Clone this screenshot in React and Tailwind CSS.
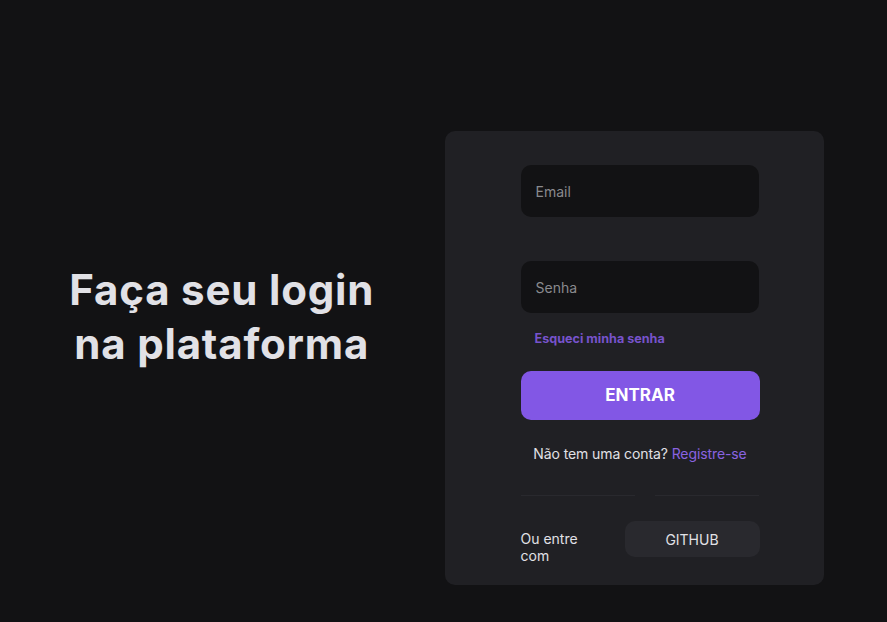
import React from "react";

const App = () => {
  return (
    <div
      className="w-full h-[622px] bg-[#121214] grid grid-cols-2"
      style={{ fontFamily: "Inter, 'Noto Sans', sans-serif" }}
    >
      {/* Heading */}
      <div className="flex items-start justify-center pt-[263px]">
        <h1 className="text-[42px] leading-[54px] font-bold text-[#e1e1e6] text-center tracking-[0.8px]">
          Faça seu login
          <br />
          na plataforma
        </h1>
      </div>

      {/* Login card */}
      <div className="pt-[131px] pl-[1px]">
        <div className="w-[379px] h-[454px] bg-[#202024] rounded-[10px] pt-[34px] pl-[76px]">
          <div className="w-[239px] flex flex-col">
            <input
              placeholder="Email"
              className="h-[52px] w-[238px] rounded-[10px] bg-[#121214] px-[15px] text-[14px] text-[#e1e1e6] placeholder:text-[#8a8a8e] outline-none"
            />
            <input
              type="password"
              placeholder="Senha"
              className="mt-[44px] h-[52px] w-[238px] rounded-[10px] bg-[#121214] px-[15px] text-[14px] text-[#e1e1e6] placeholder:text-[#8a8a8e] outline-none"
            />
            <a className="mt-[17px] pl-[14px] text-[12.6px] leading-[18px] font-bold text-[#7753cc]">
              Esqueci minha senha
            </a>
            <button className="mt-[23px] h-[49px] w-[239px] rounded-[10px] bg-[#8257e5] text-white text-[17px] font-bold">
              ENTRAR
            </button>
            <p className="mt-[24px] text-[14px] leading-[20px] text-[#e1e1e6] text-center tracking-[-0.1px]">
              Não tem uma conta?{" "}
              <a className="text-[#8a63e0]">Registre-se</a>
            </p>
            <div className="mt-[31px] flex gap-[20px]">
              <div className="h-px w-[114px] bg-[#29292e]" />
              <div className="h-px w-[104px] bg-[#29292e]" />
            </div>
            <div className="mt-[25px] flex items-start justify-between">
              <p className="w-[80px] mt-[9px] text-[14px] leading-[17px] text-[#e1e1e6]">
                Ou entre com
              </p>
              <button className="h-[36px] w-[135px] rounded-[10px] bg-[#29292e] text-[14px] text-[#e1e1e6]">
                GITHUB
              </button>
            </div>
          </div>
        </div>
      </div>
    </div>
  );
};

export default App;
